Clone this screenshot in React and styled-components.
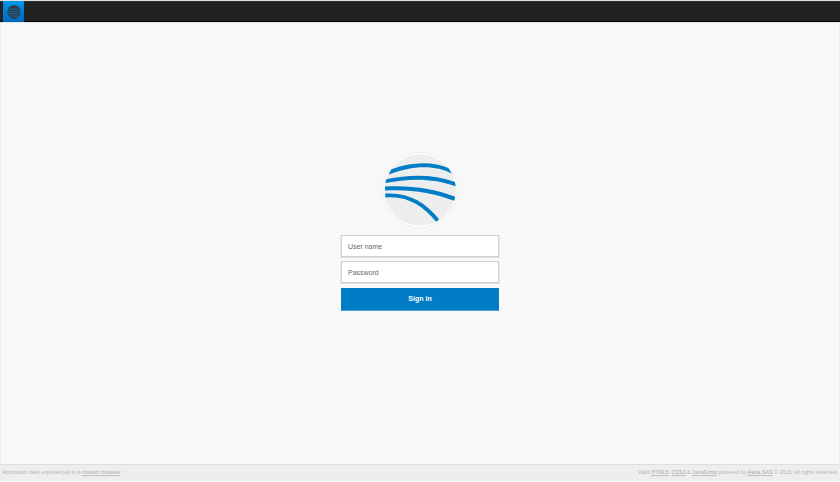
import React from "react";
import styled, { createGlobalStyle } from "styled-components";

const GlobalStyle = createGlobalStyle`
  * { box-sizing: border-box; }
  body { margin: 0; background: #f8f8f8; font-family: "Liberation Sans", Arial, sans-serif; }
`;

const Page = styled.div`
  display: flex;
  flex-direction: column;
  height: 482px;
  overflow: hidden;
  background: #f8f8f8;
`;

const TopBar = styled.header`
  flex: none;
  height: 22px;
  padding-left: 3px;
  background: #222;
  border-top: 1px solid #dce3e1;
  border-bottom: 1px solid #050505;
  box-shadow: inset 0 1px #2d3331, 0 1px #e4e4e4;
`;

const HomeButton = styled.a`
  display: flex;
  align-items: center;
  justify-content: center;
  width: 21px;
  height: 21px;
  background: linear-gradient(#0098ea, #0065bf);
`;

const Main = styled.main`
  flex: 1;
  display: flex;
  justify-content: center;
  padding-top: 129px;
  border: solid #efefef;
  border-width: 0 1px;
`;

const LoginForm = styled.form`
  display: flex;
  flex-direction: column;
  align-items: center;
  width: 158px;
`;

const Emblem = styled.svg`
  display: block;
  width: 78px;
  height: 78px;
  margin-bottom: 6px;
`;

const Field = styled.label`
  display: flex;
  align-items: center;
  width: 158px;
  height: 22px;
  margin-bottom: 4.3px;
  padding: 0 6px;
  border: 1px solid #d0d0d0;
  background: #fff;
  box-shadow: 0 0.5px 0 0.5px #dcdcdc;
`;

const FieldInput = styled.input`
  width: 100%;
  height: 14px;
  padding: 0;
  border: 0;
  outline: 0;
  background: transparent;
  font: 7px "Liberation Sans", Arial, sans-serif;
  transform: scaleY(1.14);
  &::placeholder { color: #6a6a6a; opacity: 1; }
`;

const SubmitButton = styled.button`
  width: 158px;
  height: 23px;
  padding: 0;
  border: 0;
  border-bottom: 1px solid #4ba1d5;
  background: #007dc6;
  color: #fff;
  font: bold 7px "Liberation Sans", Arial, sans-serif;
`;

const ButtonLabel = styled.span`
  display: block;
  transform: scaleY(1.1);
`;

const Footer = styled.footer`
  flex: none;
  display: flex;
  justify-content: space-between;
  height: 18px;
  padding: 4px 2px 0;
  background: #eee;
  border-top: 1px solid #dedede;
  border-bottom: 1px solid #f7f7f7;
  color: #b5b5b5;
  font-size: 5.35px;
  line-height: 7px;
  white-space: nowrap;
`;

const FooterText = styled.span`
  display: block;
  transform: scaleY(1.1);
`;

const FooterLink = styled.a`
  color: #aaa;
  text-decoration: underline #c3c3c3;
`;

const SmallGlobe = () => (
  <svg width="16" height="16" viewBox="0 0 16 16">
    <circle cx="8" cy="8" r="6.8" fill="#303942" />
    <g fill="none" stroke="#087bc8" strokeWidth="0.8">
      <path d="M1.8 6C6 3.5 10 5.8 14.2 5.5" />
      <path d="M1.2 8.2C5.5 5.8 9 8.7 14.8 7.6" />
      <path d="M1.3 10.2C5.5 8 9 11.2 14.5 9.7" />
      <path d="M3 12.4C6 10.6 9 13 12.4 12.2" />
    </g>
  </svg>
);

const GlobeEmblem = () => (
  <Emblem viewBox="0 0 78 78">
    <circle cx="39" cy="39" r="37.6" fill="#fff" stroke="#e8e8e8" strokeWidth="0.7" />
    <circle cx="39" cy="39" r="35.8" fill="#ededed" />
    <g fill="#007dc6">
      <path d="M10.1 18.4C29 10.8 52 9.9 67.4 16.9L71 22.6C54 13.3 30 14.4 7.7 23.6Z" />
      <path d="M5.3 28.3C29 23.1 53 23.2 74 31L74.6 35.3C53 27 28 27.1 4.3 32Z" />
      <path d="M4.1 35.5C30 33.9 54 37.8 74.2 45.8L73.2 49.8C52 41.9 29 37.9 4.1 39.6Z" />
      <path d="M4.1 42.6C27 40.9 44 50.6 58.1 68.3L55.2 70.8C42 54.8 26 44.5 4.6 46.6Z" />
    </g>
  </Emblem>
);

export default function App() {
  return (
    <Page>
      <GlobalStyle />
      <TopBar>
        <HomeButton aria-label="Home"><SmallGlobe /></HomeButton>
      </TopBar>
      <Main>
        <LoginForm>
          <GlobeEmblem />
          <Field><FieldInput type="text" placeholder="User name" /></Field>
          <Field><FieldInput type="password" placeholder="Password" /></Field>
          <SubmitButton type="button"><ButtonLabel>Sign in</ButtonLabel></SubmitButton>
        </LoginForm>
      </Main>
      <Footer>
        <FooterText>Application best experienced in a <FooterLink>modern browser</FooterLink>.</FooterText>
        <FooterText>
          Valid <FooterLink>HTML5</FooterLink>, <FooterLink>CSS3</FooterLink> &amp; <FooterLink>JavaScript</FooterLink> powered by <FooterLink>Askia SAS</FooterLink> © 2015, all rights reserved.
        </FooterText>
      </Footer>
    </Page>
  );
}
